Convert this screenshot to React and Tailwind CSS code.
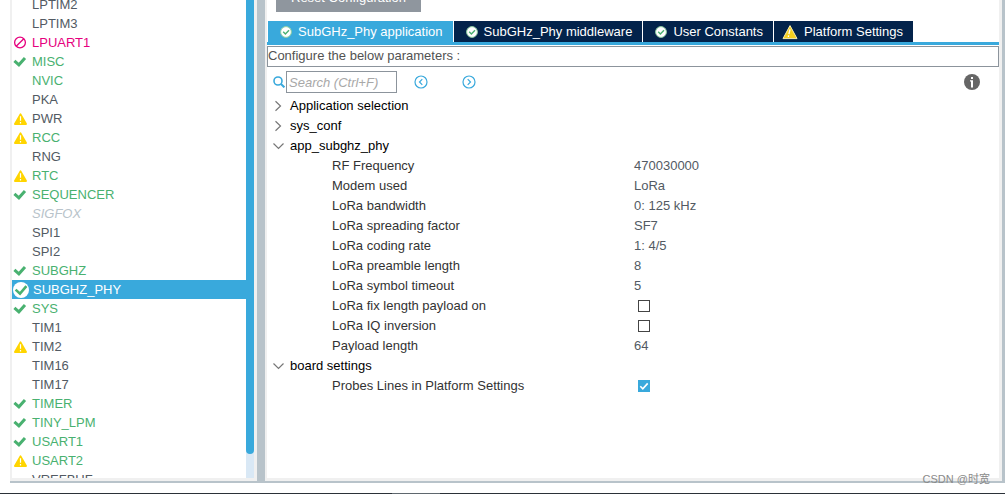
import { useState } from 'react';
import clsx from 'clsx';

const PERIPHERALS = [
  { name: 'LPTIM2' },
  { name: 'LPTIM3' },
  { name: 'LPUART1', status: 'blocked' },
  { name: 'MISC', status: 'ok', enabled: true },
  { name: 'NVIC', enabled: true },
  { name: 'PKA' },
  { name: 'PWR', status: 'warning' },
  { name: 'RCC', status: 'warning', enabled: true },
  { name: 'RNG' },
  { name: 'RTC', status: 'warning', enabled: true },
  { name: 'SEQUENCER', status: 'ok', enabled: true },
  { name: 'SIGFOX', disabled: true },
  { name: 'SPI1' },
  { name: 'SPI2' },
  { name: 'SUBGHZ', status: 'ok', enabled: true },
  { name: 'SUBGHZ_PHY', status: 'ok', enabled: true },
  { name: 'SYS', status: 'ok', enabled: true },
  { name: 'TIM1' },
  { name: 'TIM2', status: 'warning' },
  { name: 'TIM16' },
  { name: 'TIM17' },
  { name: 'TIMER', status: 'ok', enabled: true },
  { name: 'TINY_LPM', status: 'ok', enabled: true },
  { name: 'USART1', status: 'ok', enabled: true },
  { name: 'USART2', status: 'warning', enabled: true },
  { name: 'VREFBUF' },
];

const TABS = [
  { name: 'SubGHz_Phy application', status: 'ok' },
  { name: 'SubGHz_Phy middleware', status: 'ok' },
  { name: 'User Constants', status: 'ok' },
  { name: 'Platform Settings', status: 'warning' },
];

const GROUPS = [
  { name: 'Application selection', params: [] },
  { name: 'sys_conf', params: [] },
  {
    name: 'app_subghz_phy',
    open: true,
    params: [
      { id: 'rf', label: 'RF Frequency', value: '470030000' },
      { id: 'modem', label: 'Modem used', value: 'LoRa' },
      { id: 'bw', label: 'LoRa bandwidth', value: '0: 125 kHz' },
      { id: 'sf', label: 'LoRa spreading factor', value: 'SF7' },
      { id: 'cr', label: 'LoRa coding rate', value: '1: 4/5' },
      { id: 'preamble', label: 'LoRa preamble length', value: '8' },
      { id: 'timeout', label: 'LoRa symbol timeout', value: '5' },
      { id: 'fixlen', label: 'LoRa fix length payload on', value: false },
      { id: 'iq', label: 'LoRa IQ inversion', value: false },
      { id: 'payload', label: 'Payload length', value: '64' },
    ],
  },
  {
    name: 'board settings',
    open: true,
    params: [{ id: 'probes', label: 'Probes Lines in Platform Settings', value: true }],
  },
];

function StatusIcon({ status, selected }) {
  if (status === 'ok' && selected) {
    return (
      <svg className="h-4 w-4 shrink-0" viewBox="0 0 16 16" fill="none">
        <circle cx="8" cy="8" r="8" fill="#fff" />
        <path d="M2.6 7.6l4.4 4L13.4 4.2" stroke="#49b170" strokeWidth="2.6" />
      </svg>
    );
  }
  if (status === 'ok') {
    return (
      <svg className="h-4 w-4 shrink-0" viewBox="0 0 16 16" fill="none">
        <path d="M2.4 6.8l4.5 4L13 4" stroke="#49b170" strokeWidth="3" />
      </svg>
    );
  }
  if (status === 'warning') {
    return (
      <svg className="h-4 w-4 shrink-0" viewBox="0 0 16 16">
        <path d="M8.5 3.4L14 13H3z" fill="#ffd500" stroke="#ffd500" strokeWidth="2" strokeLinejoin="round" />
        <path d="M8.5 5.2v4.6M8.5 11v1.6" stroke="#fff" strokeWidth="1.2" />
      </svg>
    );
  }
  if (status === 'blocked') {
    return (
      <svg className="h-4 w-4 shrink-0" viewBox="0 0 16 16" fill="none" stroke="#e6007e" strokeWidth="1.3">
        <circle cx="8" cy="7.5" r="5.4" />
        <path d="M4.2 11.3l7.6-7.6" />
      </svg>
    );
  }
  return <span className="w-4 shrink-0" />;
}

function TabIcon({ status }) {
  if (status === 'warning') {
    return (
      <svg className="h-4 w-4 shrink-0" viewBox="0 0 16 16">
        <path d="M8 1.6L15 14.6H1z" fill="#f4cf1f" stroke="#f7ecb0" strokeWidth="1" strokeLinejoin="round" />
        <path d="M8 5.4L6.9 10M6.6 11.4l-.3 1.6" stroke="#fff" strokeWidth="1.3" />
      </svg>
    );
  }
  return (
    <svg className="h-3 w-3 shrink-0" viewBox="0 0 12 12" fill="none">
      <circle cx="6" cy="6" r="5.4" fill="#fff" stroke="#8fd0a2" strokeWidth="1" />
      <path d="M3.2 5.8l2.2 2.2 3.6-3.8" stroke="#49b170" strokeWidth="1.4" />
    </svg>
  );
}

function PeripheralList() {
  const [selected, setSelected] = useState('SUBGHZ_PHY');

  return (
    <aside className="flex w-[247px] shrink-0 overflow-hidden border-b-3 border-l-2 border-r-3 border-[#f0f0f0]">
      <ul className="-mt-[5px] flex-1">
        {PERIPHERALS.map((p) => {
          const active = p.name === selected;
          return (
            <li key={p.name}>
              <button
                type="button"
                disabled={p.disabled}
                onClick={() => setSelected(p.name)}
                className={clsx(
                  'flex h-[19px] w-full items-center gap-1 text-left',
                  active && 'bg-[#39a9dc] pl-px text-white',
                  !active && p.status === 'blocked' && 'text-[#e6007e]',
                  !active && p.enabled && 'text-[#49b170]',
                  p.disabled && 'italic text-[#b8c3ca]',
                  !active && !p.enabled && !p.disabled && p.status !== 'blocked' && 'text-[#525a63]'
                )}
              >
                <StatusIcon status={p.status} selected={active} />
                {p.name}
              </button>
            </li>
          );
        })}
      </ul>
      {/* Scrollbar */}
      <div className="w-2 bg-[#d9e8f5]">
        <div className="h-[95%] rounded-b-full bg-[#39a9dc]" />
      </div>
    </aside>
  );
}

function Tabs() {
  const [active, setActive] = useState(TABS[0].name);

  return (
    <div role="tablist" className="mt-[9px] flex gap-px border-b-3 border-[#39a9dc] pl-px">
      {TABS.map((t) => (
        <button
          key={t.name}
          type="button"
          role="tab"
          aria-selected={t.name === active}
          onClick={() => setActive(t.name)}
          className={clsx(
            'flex h-[21px] items-center gap-1.5 pr-2.5 text-white',
            t.status === 'warning' ? 'pl-2' : 'pl-3',
            t.name === active ? 'bg-[#39a9dc]' : 'bg-[#03234b]'
          )}
        >
          <TabIcon status={t.status} />
          {t.name}
        </button>
      ))}
    </div>
  );
}

function SearchBar() {
  return (
    <div className="mt-1 flex h-[22px] items-center pl-1.5 pr-[19px]">
      <label htmlFor="search" aria-label="Search">
        <svg className="h-3 w-3" viewBox="0 0 12 12" fill="none" stroke="#39a9dc" strokeWidth="1.6">
          <circle cx="5" cy="5" r="4" />
          <path d="M8 8l3.4 3.4" strokeWidth="2" />
        </svg>
      </label>
      <input
        id="search"
        type="text"
        placeholder="Search (Ctrl+F)"
        className="ml-px h-[22px] w-[111px] border border-[#8c949c] px-0.5 placeholder:italic placeholder:text-[#a8a8a8]"
      />
      <button type="button" aria-label="Previous" className="ml-[17px]">
        <svg className="h-3.5 w-3.5" viewBox="0 0 14 14" fill="none" stroke="#39a9dc" strokeWidth="1.2">
          <circle cx="7" cy="7" r="6" />
          <path d="M8.3 4.2L5.5 7l2.8 2.8" />
        </svg>
      </button>
      <button type="button" aria-label="Next" className="ml-[34px]">
        <svg className="h-3.5 w-3.5" viewBox="0 0 14 14" fill="none" stroke="#39a9dc" strokeWidth="1.2">
          <circle cx="7" cy="7" r="6" />
          <path d="M5.7 4.2L8.5 7l-2.8 2.8" />
        </svg>
      </button>
      <button type="button" aria-label="Information" className="ml-auto">
        <svg className="h-4 w-4" viewBox="0 0 16 16">
          <circle cx="8" cy="8" r="8" fill="#666" />
          <path d="M7 3h2v2H7zM6 6.3h3V13.5H7V7.4H6z" fill="#fff" />
        </svg>
      </button>
    </div>
  );
}

function ParamRow({ param }) {
  const [checked, setChecked] = useState(param.value === true);

  return (
    <tr className="h-5">
      <th scope="row" className="w-[302px] p-0 text-left font-normal text-[#333]">
        {typeof param.value === 'boolean' ? <label htmlFor={param.id}>{param.label}</label> : param.label}
      </th>
      <td className="p-0 text-[#525a63]">
        {typeof param.value === 'boolean' ? (
          <span className="relative ml-1 block h-3 w-3">
            <input
              id={param.id}
              type="checkbox"
              checked={checked}
              onChange={(e) => setChecked(e.target.checked)}
              className="block h-3 w-3 appearance-none border border-[#444] bg-white checked:border-[#39a9dc] checked:bg-[#39a9dc]"
            />
            {checked && (
              <svg className="pointer-events-none absolute inset-0" viewBox="0 0 12 12" fill="none">
                <path d="M2.3 6.3l2.5 2.5 4.9-5.4" stroke="#fff" strokeWidth="1.6" />
              </svg>
            )}
          </span>
        ) : (
          param.value
        )}
      </td>
    </tr>
  );
}

function ParamGroup({ group }) {
  const [open, setOpen] = useState(!!group.open);

  return (
    <section>
      <button
        type="button"
        aria-expanded={open}
        onClick={() => setOpen(!open)}
        className="flex h-5 items-center gap-[5px] pl-1.5 text-black"
      >
        <svg className="h-3 w-3" viewBox="0 0 12 12" fill="none" stroke="#777" strokeWidth="1.2">
          <path d={open ? 'M.5 3.5L5.5 8.5l5-5' : 'M2.5 1.2L7.5 6l-5 4.8'} />
        </svg>
        {group.name}
      </button>
      {open && group.params.length > 0 && (
        <div className="pl-[65px]">
          <table className="w-full table-fixed border-collapse">
            <tbody>
              {group.params.map((p) => (
                <ParamRow key={p.id} param={p} />
              ))}
            </tbody>
          </table>
        </div>
      )}
    </section>
  );
}

export default function App() {
  return (
    <div className="relative flex h-screen flex-col overflow-hidden bg-white font-['Liberation_Sans',Arial,sans-serif] text-[13px] leading-4">
      <div className="ml-2.5 flex min-h-0 flex-1 border-b-2 border-r-3 border-[#b8c3ca]">
        <PeripheralList />
        <div className="w-2 shrink-0 bg-[#b8c3ca]" />
        <main className="min-w-0 flex-1 overflow-hidden border-b-3 border-l-2 border-r-3 border-[#f0f0f0]">
          <button
            type="button"
            className="-mt-[14px] ml-[9px] block h-[26px] bg-[#8f969e] px-[15px] pb-0.5 text-white"
          >
            Reset Configuration
          </button>
          <Tabs />
          <p className="mt-px border border-[#8c949c] pb-0.5 pt-px text-[#525252]">Configure the below parameters :</p>
          <SearchBar />
          <div className="mt-[3px]">
            {GROUPS.map((g) => (
              <ParamGroup key={g.name} group={g} />
            ))}
          </div>
        </main>
      </div>
      {/* Window edge */}
      <div className="mt-2.5 flex h-px shrink-0 bg-[#2b3138]">
        <span className="ml-[39%] w-12 bg-[#5f676e]" />
      </div>
      <span className="absolute bottom-[7px] right-[15px] font-['Liberation_Sans','Noto_Sans_CJK_SC',sans-serif] text-[11px] leading-4 text-[#8a8a8a]">
        CSDN @时宽
      </span>
    </div>
  );
}
